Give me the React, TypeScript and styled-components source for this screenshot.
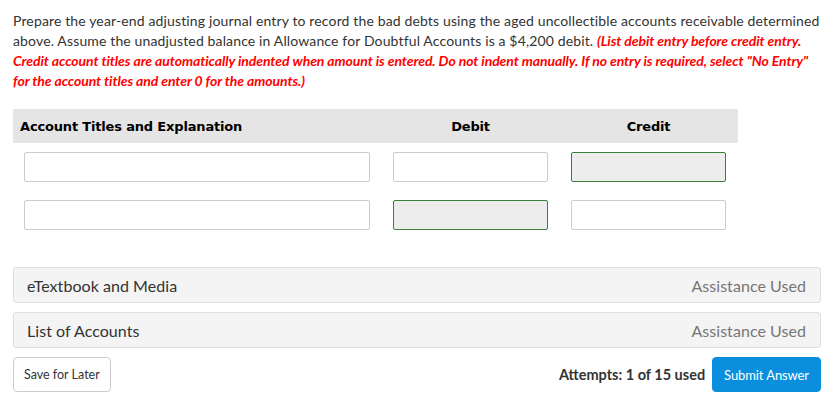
import React from "react";
import styled, { createGlobalStyle } from "styled-components";

const GlobalStyle = createGlobalStyle`
	body {
		margin: 0;
		background: #fff;
		font-family: Lato, "Open Sans", sans-serif;
		color: #333;
	}
`;

const Page = styled.div`
	padding: 11px 13px 8px 13px;
	width: 808px;
`;

const Prompt = styled.p`
	margin: 0;
	font-size: 14px;
	line-height: 20px;
	letter-spacing: 0.14px;
	color: #333;
`;

const Note = styled.span`
	color: #f00;
	font-style: italic;
	font-weight: 700;
	letter-spacing: -0.08px;
`;

const Journal = styled.div`
	width: 725px;
	margin-top: 18px;
`;

const Columns = styled.div`
	display: grid;
	grid-template-columns: 346px 155px 155px;
	column-gap: 23px;
	padding: 0 11px;
`;

const HeadRow = styled(Columns)`
	background: #e5e5e5;
	height: 34px;
	align-items: center;
	font-family: "DejaVu Sans", Verdana, sans-serif;
	font-weight: 700;
	font-size: 13px;
	letter-spacing: -0.17px;
	color: #000;
`;

const HeadCell = styled.div<{ $center?: boolean }>`
	text-align: ${(p) => (p.$center ? "center" : "left")};
	margin-left: ${(p) => (p.$center ? "0" : "-4px")};
`;

const EntryRow = styled(Columns)`
	margin-top: 9px;
	& + & {
		margin-top: 18px;
	}
`;

const Field = styled.div<{ $locked?: boolean }>`
	height: 30px;
	box-sizing: border-box;
	border: 1px solid ${(p) => (p.$locked ? "#3c7c3c" : "#ccc")};
	background: ${(p) => (p.$locked ? "#ededed" : "#fff")};
	border-radius: 2px;
`;

const Panels = styled.div`
	margin-top: 37px;
	display: flex;
	flex-direction: column;
	gap: 9px;
`;

const Panel = styled.div`
	height: 36px;
	box-sizing: border-box;
	background: #f4f4f4;
	border: 1px solid #dedede;
	border-radius: 3px;
	display: flex;
	align-items: center;
	justify-content: space-between;
	padding: 0 14px 0 13px;
	font-size: 16px;
	letter-spacing: 0.05px;
`;

const PanelTitle = styled.span`
	color: #333;
`;

const PanelStatus = styled.span`
	color: #777;
`;

const Footer = styled.div`
	margin-top: 9px;
	display: flex;
	align-items: center;
	gap: 7px;
`;

const Button = styled.button<{ $primary?: boolean }>`
	height: 35px;
	box-sizing: border-box;
	border-radius: 4px;
	font-family: Lato, sans-serif;
	font-size: ${(p) => (p.$primary ? "13px" : "12.5px")};
	padding: 0 ${(p) => (p.$primary ? "11px" : "10px")};
	border: 1px solid ${(p) => (p.$primary ? "#0a8fde" : "#ccc")};
	background: ${(p) => (p.$primary ? "#0a8fde" : "#fff")};
	color: ${(p) => (p.$primary ? "#fff" : "#333")};
	letter-spacing: ${(p) => (p.$primary ? "-0.1px" : "0")};
`;

const Attempts = styled.span`
	margin-left: auto;
	font-size: 14.5px;
	font-weight: 700;
	color: #333;
`;

export default function App() {
	const rows = [
		{ debit: false, credit: true },
		{ debit: true, credit: false },
	];
	return (
		<>
			<GlobalStyle />
			<Page>
				<Prompt>
					Prepare the year-end adjusting journal entry to record the bad debts using the aged uncollectible accounts
					receivable determined above. Assume the unadjusted balance in Allowance for Doubtful Accounts is a $4,200
					debit.{" "}
					<Note>
						(List debit entry before credit entry. Credit account titles are automatically indented when amount is
						entered. Do not indent manually. If no entry is required, select "No Entry" for the account titles and
						enter 0 for the amounts.)
					</Note>
				</Prompt>
				<Journal>
					<HeadRow>
						<HeadCell>Account Titles and Explanation</HeadCell>
						<HeadCell $center>Debit</HeadCell>
						<HeadCell $center>Credit</HeadCell>
					</HeadRow>
					{rows.map((r, i) => (
						<EntryRow key={i}>
							<Field />
							<Field $locked={r.debit} />
							<Field $locked={r.credit} />
						</EntryRow>
					))}
				</Journal>
				<Panels>
					<Panel>
						<PanelTitle>eTextbook and Media</PanelTitle>
						<PanelStatus>Assistance Used</PanelStatus>
					</Panel>
					<Panel>
						<PanelTitle>List of Accounts</PanelTitle>
						<PanelStatus>Assistance Used</PanelStatus>
					</Panel>
				</Panels>
				<Footer>
					<Button>Save for Later</Button>
					<Attempts>Attempts: 1 of 15 used</Attempts>
					<Button $primary>Submit Answer</Button>
				</Footer>
			</Page>
		</>
	);
}
